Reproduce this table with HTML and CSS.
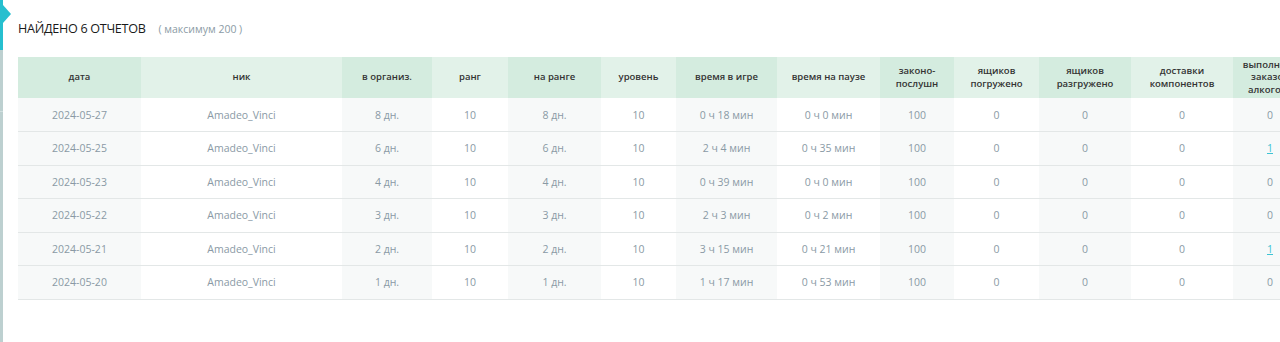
FILE: index.html
```html
<!DOCTYPE html>
<html lang="ru">
  <head>
    <meta charset="utf-8">
    <link rel="stylesheet" href="styles.css">
  </head>
  <body>
    <div class="sidebar">
      <div class="sidebar-active"></div>
      <div class="sidebar-rest"></div>
    </div>
    <div class="main">
      <div class="title">
        <span class="title-main">НАЙДЕНО 6 ОТЧЕТОВ</span>
        <span class="title-sub">( максимум 200 )</span>
      </div>
      <table class="reports">
        <colgroup>
          <col style="width: 123px"><col style="width: 201px"><col style="width: 90px"><col style="width: 76px">
          <col style="width: 93px"><col style="width: 75px"><col style="width: 101px"><col style="width: 103px">
          <col style="width: 74px"><col style="width: 85px"><col style="width: 92px"><col style="width: 102px">
          <col style="width: 74px">
        </colgroup>
        <thead>
          <tr>
            <th>дата</th>
            <th>ник</th>
            <th>в организ.</th>
            <th>ранг</th>
            <th>на ранге</th>
            <th>уровень</th>
            <th>время в игре</th>
            <th>время на паузе</th>
            <th>законо-<br>послушн</th>
            <th>ящиков<br>погружено</th>
            <th>ящиков<br>разгружено</th>
            <th>доставки<br>компонентов</th>
            <th>выполнено<br>заказов<br>алкоголя</th>
          </tr>
        </thead>
        <tbody>
          <tr>
            <td>2024-05-27</td><td>Amadeo_Vinci</td><td>8 дн.</td><td>10</td><td>8 дн.</td><td>10</td>
            <td>0 ч 18 мин</td><td>0 ч 0 мин</td><td>100</td><td>0</td><td>0</td><td>0</td><td>0</td>
          </tr>
          <tr>
            <td>2024-05-25</td><td>Amadeo_Vinci</td><td>6 дн.</td><td>10</td><td>6 дн.</td><td>10</td>
            <td>2 ч 4 мин</td><td>0 ч 35 мин</td><td>100</td><td>0</td><td>0</td><td>0</td><td><a href="#">1</a></td>
          </tr>
          <tr>
            <td>2024-05-23</td><td>Amadeo_Vinci</td><td>4 дн.</td><td>10</td><td>4 дн.</td><td>10</td>
            <td>0 ч 39 мин</td><td>0 ч 0 мин</td><td>100</td><td>0</td><td>0</td><td>0</td><td>0</td>
          </tr>
          <tr>
            <td>2024-05-22</td><td>Amadeo_Vinci</td><td>3 дн.</td><td>10</td><td>3 дн.</td><td>10</td>
            <td>2 ч 3 мин</td><td>0 ч 2 мин</td><td>100</td><td>0</td><td>0</td><td>0</td><td>0</td>
          </tr>
          <tr>
            <td>2024-05-21</td><td>Amadeo_Vinci</td><td>2 дн.</td><td>10</td><td>2 дн.</td><td>10</td>
            <td>3 ч 15 мин</td><td>0 ч 21 мин</td><td>100</td><td>0</td><td>0</td><td>0</td><td><a href="#">1</a></td>
          </tr>
          <tr>
            <td>2024-05-20</td><td>Amadeo_Vinci</td><td>1 дн.</td><td>10</td><td>1 дн.</td><td>10</td>
            <td>1 ч 17 мин</td><td>0 ч 53 мин</td><td>100</td><td>0</td><td>0</td><td>0</td><td>0</td>
          </tr>
        </tbody>
      </table>
    </div>
  </body>
</html>
```

FILE: styles.css
```css
html, body {height: 100%}
body {margin: 0; background: #fff; font-family: "Open Sans", "Noto Sans", sans-serif; display: flex; overflow: hidden}

.sidebar {width: 3px; flex: none; display: flex; flex-direction: column}
.sidebar-active {position: relative; height: 50px; background: #26bfcf}
/* the little pointer sticks out over the content */
.sidebar-active::after {content: ""; position: absolute; left: 3px; top: 5px; border-left: 8px solid #26bfcf; border-top: 9px solid transparent; border-bottom: 9px solid transparent}
.sidebar-rest {flex: 1; background: linear-gradient(#bdd0d0 61px, #d2e0e0 61px, #d2e0e0 62px, #bdd0d0 62px)}

.main {flex: 1; min-width: 0; overflow: hidden; padding: 18px 0 0 15px}

.title {height: 20px; display: flex; align-items: center; gap: 13px}
.title-main {font-size: 12.6px; letter-spacing: -0.3px; color: #1a1a1a}
.title-sub {font-size: 10.5px; color: #8b9ba5; padding-top: 2px}

.reports {margin-top: 19px; border-collapse: collapse; table-layout: fixed; width: 1289px}
.reports th {height: 41px; padding: 0 2px; box-sizing: border-box; font-size: 9.5px; font-weight: 600; line-height: 12.5px; color: #333; text-align: center; vertical-align: middle; background: #e2f2e9}
.reports th:nth-child(odd) {background: #d4ecdf}
.reports td {height: 33.5px; padding: 0 4px; box-sizing: border-box; font-size: 10.5px; color: #8a9aa5; text-align: center; border-bottom: 1px solid #e3e7e7; background: #fff}
.reports td:nth-child(odd) {background: #f7f9f9}
.reports a {color: #3ec3d3}
```
